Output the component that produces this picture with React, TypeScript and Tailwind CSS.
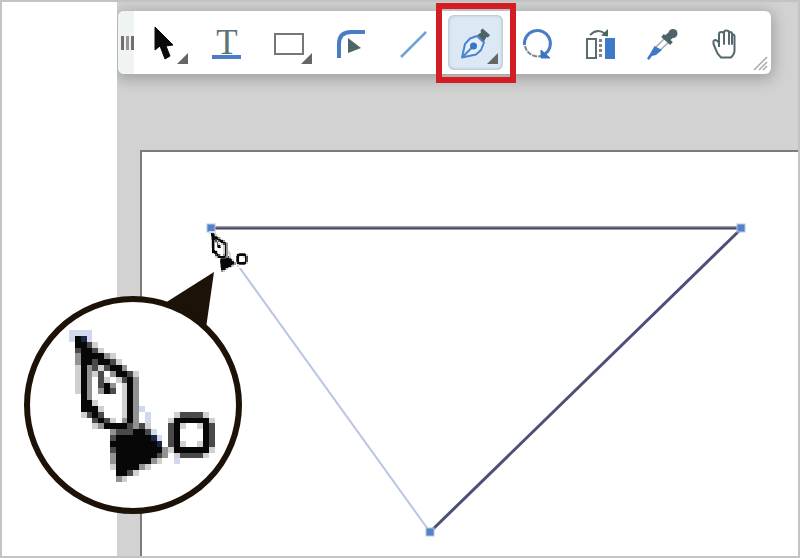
import React from 'react';

interface Tool {
  label: string;
  icon: React.ReactNode;
  hasMenu?: boolean;
  active?: boolean;
}

const TOOLS: Tool[] = [
  {
    label: 'Select',
    hasMenu: true,
    icon: <path d="M17 12V35L22 31L27 44L32 41L28 31L35 30Z" fill="#0a0a0a" stroke="#0a0a0a" strokeWidth="1" />,
  },
  {
    label: 'Text',
    icon: (
      <>
        <text x="27" y="39" textAnchor="middle" fontSize="35" fill="#5a7478" className="font-['Liberation_Serif',serif]">T</text>
        <rect x="12" y="40" width="29" height="4" fill="#4a7dc6" />
      </>
    ),
  },
  {
    label: 'Rectangle',
    hasMenu: true,
    icon: <rect x="13" y="19" width="28" height="20" fill="#fff" stroke="#777" strokeWidth="2" />,
  },
  {
    label: 'Corner',
    icon: (
      <>
        <path d="M15 43V29Q15 17 27 17H41" fill="none" stroke="#4a7dc6" strokeWidth="4" />
        <path d="M24 23V38L37 33Z" fill="#4d6468" />
      </>
    ),
  },
  {
    label: 'Line',
    icon: <path d="M15 42L40 17" stroke="#74a0d9" strokeWidth="2.500" />,
  },
  {
    label: 'Pen',
    hasMenu: true,
    active: true,
    icon: (
      <>
        <path d="M14 42.500L17 29L22 23.500L29 21L36 27.500L33 35L28 39.500Z" fill="#e4effa" stroke="#4a84ce" strokeWidth="2" strokeLinejoin="round" />
        <path d="M14.500 42L25 31.500" stroke="#4a84ce" strokeWidth="2" />
        <circle cx="25.500" cy="31" r="3.500" fill="#3a74c4" />
        <path d="M34.500 13.500L42 20L40 22.500L38.500 22L36 26.500L29.500 20L33 17.500L32.500 15.500Z" fill="#4d6468" />
      </>
    ),
  },
  {
    label: 'Rotate',
    icon: (
      <>
        <path d="M14.500 30A13 13 0 1 1 35 39" fill="none" stroke="#4a7dc6" strokeWidth="3" />
        <path d="M15 31A13 13 0 0 0 31 41" fill="none" stroke="#7d8588" strokeWidth="2" strokeDasharray="5 1" />
        <path d="M31 35V43H40Z" fill="#3a74c4" stroke="#3a74c4" strokeWidth="1" />
      </>
    ),
  },
  {
    label: 'Mirror',
    icon: (
      <>
        <rect x="15" y="24" width="9" height="19" fill="#fff" stroke="#5c6c70" strokeWidth="2" />
        <path d="M28.500 24V43" stroke="#7d8588" strokeWidth="3" strokeDasharray="3 2" />
        <rect x="33" y="23" width="10" height="21" fill="#3f7ac6" />
        <path d="M18 20Q25 13 33 18.500" fill="none" stroke="#5c6c70" strokeWidth="2" />
        <path d="M36 14V21.500L29 20.500Z" fill="#4d6468" />
      </>
    ),
  },
  {
    label: 'Eyedropper',
    icon: (
      <>
        <path d="M31 23L20 34L24 37L35 27Z" fill="#fff" stroke="#a3adb0" strokeWidth="1.500" />
        <path d="M20.500 31L28 35L22 40L18 41L15 45L13 43.500L16.500 38Z" fill="#3f7ac6" />
        <path d="M28.500 20.500L37.500 28.500" stroke="#4d6468" strokeWidth="4" />
        <path d="M32 24L39.500 18" stroke="#4d6468" strokeWidth="7" />
        <circle cx="39" cy="18.500" r="4.500" fill="#4d6468" />
      </>
    ),
  },
  {
    label: 'Hand',
    icon: (
      <path
        d="M23 32V19Q23 17 25.500 17T28 19V29V17.500Q28 15.500 30.500 15.500T33 17.500V29V18.500Q33 17 34 17Q36 17 36 19V29V21Q36 19.500 37 19.500Q38.500 19.500 38.500 21.500V36Q38.500 39 35 42.500H25Q21 39 20 35L17.500 29V26.500Q17.500 25 19.500 25Q22 25.500 23 28"
        fill="#fff"
        stroke="#54696d"
        strokeWidth="2"
        strokeLinejoin="round"
      />
    ),
  },
];

// One character per cursor pixel, see CURSOR_COLORS
const CURSOR_ROWS = [
  'bbbb',
  'b#nb',
  '.##4c',
  '.4##4c',
  '.8####8c',
  '.8##4##4c',
  '.c#84c4##8',
  '.c#8c4.8##4c',
  '.c#8.4c.c4#8',
  '.c#8.4#8.c#8',
  '.c#8.8#4.c#8',
  '..#8.....c#8',
  '..##c....c#8',
  '..###c...c#8b',
  '..c4#4...c#8.b....c4444c',
  '....4#4c.8#8.b...c######c',
  '....c8####484c...4#c..c#4',
  '.......8444##4b..4#....#4',
  '.......4######nb.4#....#4',
  '.......########n.4#c..c#4',
  '.......4########8c######c',
  '.......8#######48.c4444c',
  '.......8######8c..b',
  '.......c####8c',
  '........##4c',
  '........8c',
];

const CURSOR_COLORS: Record<string, string> = {
  '#': '#070707',
  '4': '#4a4a4a',
  '8': '#929292',
  c: '#d0d0d0',
  b: '#d0d9ee',
  n: '#1b2547',
};

const PenCursor = ({ className, halo }: { className: string; halo?: boolean }) => (
  <svg viewBox="0 0 25 26" shapeRendering="crispEdges" className={className} aria-hidden="true">
    {halo && <path d="M2 5L12 8L12 15L25 12V23L8 26L3 16Z" fill="#fff" />}
    {CURSOR_ROWS.map((row, y) =>
      row.split('').map((cell, x) =>
        cell === '.' ? null : <rect key={`${x}-${y}`} x={x} y={y} width="1" height="1" fill={CURSOR_COLORS[cell]} />
      )
    )}
  </svg>
);

const ToolButton = ({ tool }: { tool: Tool }) => (
  <div className="relative">
    <button
      type="button"
      aria-label={tool.label}
      aria-pressed={!!tool.active}
      className={`block size-[55px] rounded-md ${tool.active ? 'bg-[#dce9f5] shadow-[inset_0_0_3px_1px_#b3c0cc]' : ''}`}
    >
      <svg viewBox="0 0 55 55" className="size-full">
        {tool.icon}
        {tool.hasMenu && <path d="M50 38V49H39Z" fill="#666" />}
      </svg>
    </button>
    {tool.active && <div className="pointer-events-none absolute -top-3 -left-3 size-20 border-6 border-[#d31c24]" />}
  </div>
);

const Toolbar = () => (
  <div className="relative z-10 mr-[27px] ml-px flex rounded-md bg-white shadow-[0_3px_14px_3px_rgba(0,0,0,0.22)]">
    <div className="flex w-4 items-center justify-end gap-0.5 rounded-l-md bg-[#f0f3f3]">
      <span className="h-[14px] w-[3px] bg-[#6f6f6f]" />
      <span className="h-[14px] w-[3px] bg-[#9a9292]" />
      <span className="h-[14px] w-[3px] bg-[#6f6f6f]" />
    </div>
    <div className="flex gap-[7px] py-1 pl-1">
      {TOOLS.map((tool) => (
        <ToolButton key={tool.label} tool={tool} />
      ))}
    </div>
    <svg viewBox="0 0 16 16" className="absolute right-0.5 bottom-0.5 size-4" aria-hidden="true">
      <path d="M1 14L14 1M6 14L14 6M10 14L14 10" stroke="#a8a8a8" strokeWidth="1.500" />
    </svg>
  </div>
);

const Artboard = () => (
  <div className="mt-[76px] ml-[23px] flex-1 overflow-hidden border-t-2 border-l-2 border-[#7c7c7c] bg-white">
    <svg viewBox="0 0 656 404" className="block w-[656px] max-w-none">
      <path d="M69 76L288 380" stroke="#b9c5e2" strokeWidth="2" />
      <path d="M69 75H600" stroke="#9a9aa0" strokeWidth="2" />
      <path d="M69 76.500H600" stroke="#3f4462" strokeWidth="2" />
      <path d="M600 76L288 380" stroke="#4b5078" strokeWidth="3" />
      {[[69, 76], [599, 76], [288, 380]].map(([x, y]) => (
        <rect key={`${x}-${y}`} x={x - 4} y={y - 4} width="8" height="8" fill="#5682c8" stroke="#b7c8e6" strokeWidth="1" />
      ))}
    </svg>
  </div>
);

const Magnifier = () => (
  <div className="pointer-events-none absolute top-[268px] left-5 z-20">
    <svg viewBox="0 0 230 250" className="w-[230px]" aria-hidden="true">
      <path d="M192 2L143 33L184 58Z" fill="#1c1207" />
      <circle cx="111" cy="135" r="106" fill="#fff" stroke="#1c1207" strokeWidth="6" />
    </svg>
    <PenCursor className="absolute top-[60px] left-[47px] w-[146px]" />
  </div>
);

const App = () => (
  <div className="relative flex min-h-screen overflow-hidden border-2 border-[#c3c3c3] bg-white">
    <div className="w-[115px] shrink-0" />
    <main className="flex min-w-0 flex-1 flex-col overflow-hidden bg-[#d2d2d2] pt-[9px]">
      <Toolbar />
      <Artboard />
    </main>
    <PenCursor halo className="pointer-events-none absolute top-[229px] left-[207px] w-[39px]" />
    <Magnifier />
  </div>
);

export default App;
